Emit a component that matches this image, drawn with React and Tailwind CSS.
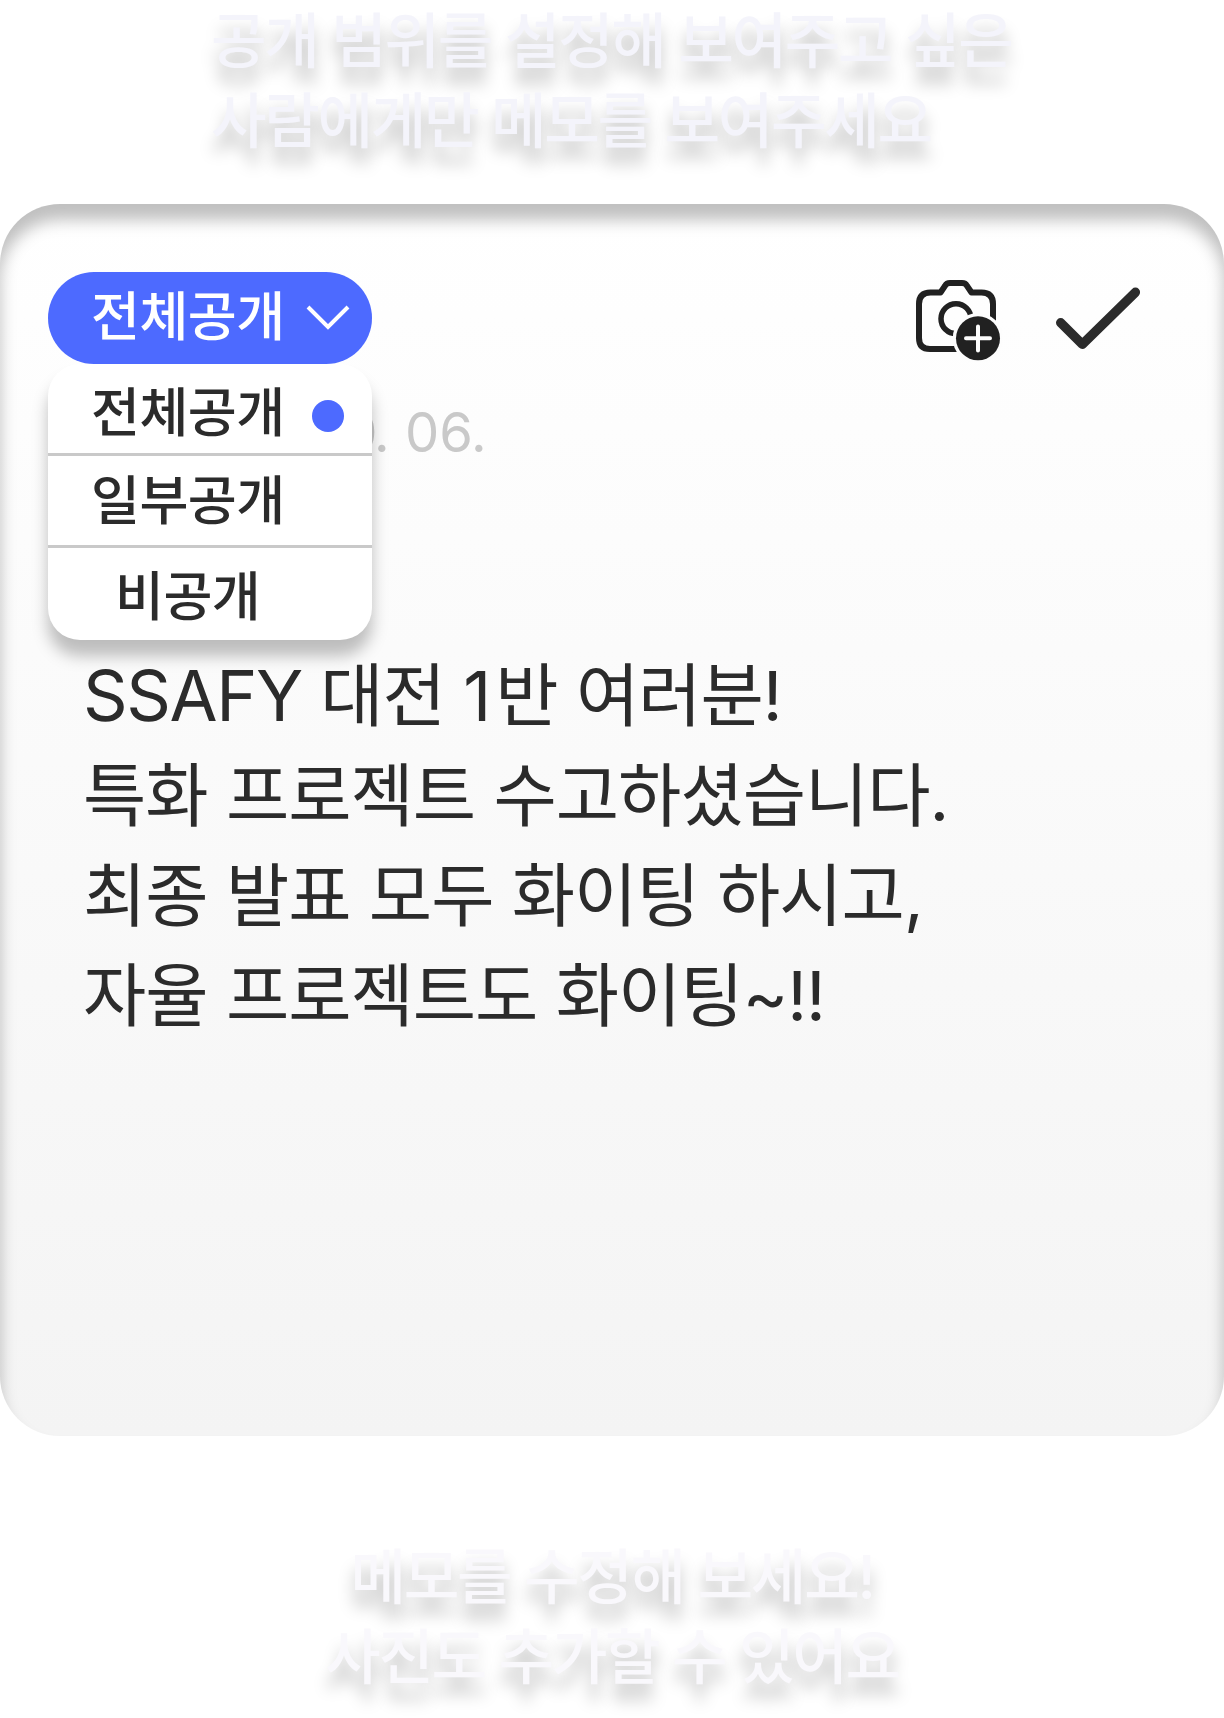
const LINES = [
  <><span className="text-[69.7px] tracking-[-1.4px]">SSAFY</span> 대전 <span className="tracking-[4px]">1</span>반 여러분!</>,
  '특화 프로젝트 수고하셨습니다.',
  '최종 발표 모두 화이팅 하시고,',
  '자율 프로젝트도 화이팅~!!',
];

const FONT = "font-['Inter','Noto_Sans_CJK_KR',sans-serif]";

function Heading({ children, className }) {
  return (
    <div className={`shrink-0 text-[60.5px] leading-[80px] font-medium tracking-[-2.4px] whitespace-nowrap [text-shadow:0_16px_16px_rgba(0,0,0,0.25)] ${className}`}>
      {children}
    </div>
  );
}

function CameraPlus() {
  return (
    <svg width="90" height="86" viewBox="0 0 90 86" fill="none" stroke="#212121" strokeWidth="6" strokeLinejoin="round">
      <path d="M58 73H18Q7 73 7 62V28Q7 16.5 18.5 16.5H28.5L33 9.8Q34.5 7 38 7H50Q53.5 7 55 9.8L59.5 16.5H69.5Q81 16.5 81 28V46" />
      <circle cx="44" cy="42.7" r="15" strokeWidth="5.5" />
      <circle cx="66" cy="62.3" r="25.3" fill="#fdfdfd" stroke="none" />
      <circle cx="66" cy="62.3" r="22" fill="#212121" stroke="none" />
      <path d="M54 62.3H78M66 50.5V74.5" stroke="#fdfdfd" strokeWidth="4" strokeLinecap="round" />
    </svg>
  );
}

function Check() {
  return (
    <svg width="88" height="66" viewBox="0 0 88 66" fill="none" stroke="#2b2b2b" strokeWidth="9.4" strokeLinecap="round" strokeLinejoin="round">
      <path d="M6.7 36.7 28.3 58.3 81.4 6.3" />
    </svg>
  );
}

export default function App() {
  return (
    <div className={`flex h-[1718px] w-[1224px] flex-col overflow-hidden bg-white ${FONT}`}>
      <Heading className="h-[204px] pt-px pl-[211px] text-[#f4f4fb]">
        <p>공개 범위를 설정해 보여주고 싶은</p>
        <p>사람에게만 메모를 보여주세요</p>
      </Heading>

      <main className="h-[1232px] shrink-0 rounded-[60px] bg-linear-to-b from-white to-[#f4f4f4] px-12 pt-[68px] text-[#2b2b2b] shadow-[inset_0_16px_16px_rgba(0,0,0,0.25)]">
        <div className="flex h-[92px] justify-between">
          <div className="relative z-10 h-[92px] w-[324px] text-[53.2px] leading-[92px] font-medium tracking-[-0.5px]">
            <button className="relative z-10 flex h-[92px] w-full items-center rounded-full bg-[#4d6aff] pl-[43px] text-white">
              <span className="-mt-[2px] w-[215px] text-left whitespace-nowrap">전체공개</span>
              <svg width="44" height="26" viewBox="0 0 44 26" fill="none" stroke="white" strokeWidth="4">
                <path d="M2 2 22 22 42 2" />
              </svg>
            </button>
            <div className="absolute top-[92px] left-0 h-[276px] w-full rounded-[32px] bg-white shadow-[0_16px_16px_rgba(0,0,0,0.25)]">
              <div className="flex h-[92px] items-center border-b-3 border-[#c9c9c9] pl-[43px]">
                <span className="mt-[9px] w-[221px]">전체공개</span>
                <i className="mt-[14px] size-8 rounded-full bg-[#4d6aff]" />
              </div>
              <div className="h-[92px] border-b-3 border-[#c9c9c9] pl-[43px] leading-[90px]">일부공개</div>
              <div className="h-[92px] pl-[67px] leading-[97px]">비공개</div>
            </div>
          </div>
          <div className="flex items-start gap-[52px] pt-1 pr-[34px]">
            <CameraPlus />
            <div className="pt-[10px]"><Check /></div>
          </div>
        </div>
        <time className="mt-[38px] ml-[109.5px] block h-[60px] text-[54.3px] leading-[60px] text-[#c9c9c9]">2023. 1<span className="tracking-[-3.5px]">0</span>. 06.</time>
        <div className="mt-[184px] ml-[35px] text-[68.8px] leading-[100px] tracking-[-1px] whitespace-nowrap">
          {LINES.map((line, i) => <p key={i}>{line}</p>)}
        </div>
      </main>

      <Heading className="pt-[101px] text-center text-[#f9f8fc]">
        <p>메모를 수정해 보세요!</p>
        <p>사진도 추가할 수 있어요</p>
      </Heading>
    </div>
  );
}
